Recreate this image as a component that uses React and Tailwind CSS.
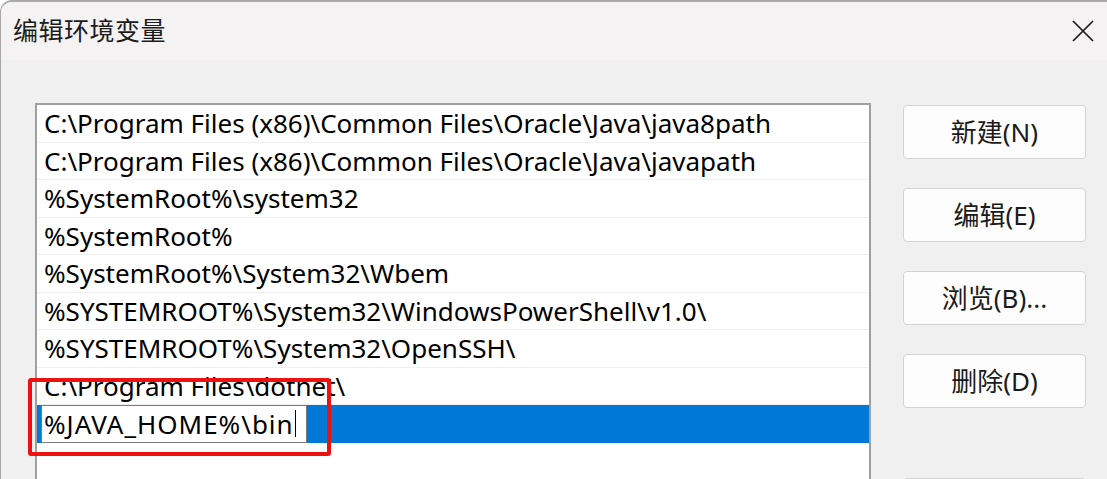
const paths = [
  "C:\\Program Files (x86)\\Common Files\\Oracle\\Java\\java8path",
  "C:\\Program Files (x86)\\Common Files\\Oracle\\Java\\javapath",
  "%SystemRoot%\\system32",
  "%SystemRoot%",
  "%SystemRoot%\\System32\\Wbem",
  "%SYSTEMROOT%\\System32\\WindowsPowerShell\\v1.0\\",
  "%SYSTEMROOT%\\System32\\OpenSSH\\",
  "C:\\Program Files\\dotnet\\",
];

const buttons = ["新建(N)", "编辑(E)", "浏览(B)...", "删除(D)"];

const font = {
  fontFamily: '"Noto Sans", "Noto Sans CJK SC", sans-serif',
};

export default function App() {
  return (
    <div
      style={font}
      className="relative w-[1107px] h-[479px] overflow-hidden bg-[#f0f0f0] border-t-2 border-l border-[#a8a8a8] rounded-tl-[12px] text-black"
    >
      {/* title bar */}
      <div className="h-[58px] flex items-center justify-between pl-[12px] pr-[13px] bg-[#f4f2f2]">
        <span className="text-[25px] text-[#1b1b1b] tracking-[0.5px]">编辑环境变量</span>
        <svg width="22" height="22" viewBox="0 0 22 22" className="mt-[-1px]">
          <path d="M1 1 L21 21 M21 1 L1 21" stroke="#1b1b1b" strokeWidth="1.7" fill="none" />
        </svg>
      </div>

      <div className="flex">
        {/* list */}
        <div className="ml-[34px] mt-[43px] w-[836px] h-[400px] border-2 border-b-0 border-[#a0a0a0] bg-white">
          {paths.map((p) => (
            <div
              key={p}
              className="h-[37.5px] flex items-center pl-[7px] border-b border-[#f0f0f0] text-[26px] leading-none whitespace-nowrap"
            >
              {p}
            </div>
          ))}
          <div className="h-[37.5px] flex items-stretch bg-[#0078d7]">
            <div className="ml-[4px] w-[266px] bg-white border border-[#7a7a7a] flex items-center pl-[2px] text-[26px] leading-none whitespace-nowrap tracking-[1px]">
              %JAVA_HOME%\bin
              <span className="inline-block w-[1.5px] h-[27px] bg-black ml-[1px]" />
            </div>
          </div>
          <div className="h-[37.5px] border-b border-[#e8e8e8]" />
        </div>

        {/* buttons */}
        <div className="ml-[32px] mt-[45px] flex flex-col gap-[29px]">
          {buttons.map((b) => (
            <div
              key={b}
              className="w-[183px] h-[54px] flex items-center justify-center bg-[#fdfdfd] border border-[#d3d3d3] rounded-[4px] text-[26px] text-[#1b1b1b]"
            >
              {b}
            </div>
          ))}
          <div className="w-[183px] h-[54px] mt-[41px] bg-[#fdfdfd] border border-[#d3d3d3] rounded-[4px]" />
        </div>
      </div>

      {/* red highlight */}
      <div className="absolute left-[27px] top-[376px] w-[303px] h-[78px] border-[4px] border-[#ee1111] rounded-[3px]" />
    </div>
  );
}
